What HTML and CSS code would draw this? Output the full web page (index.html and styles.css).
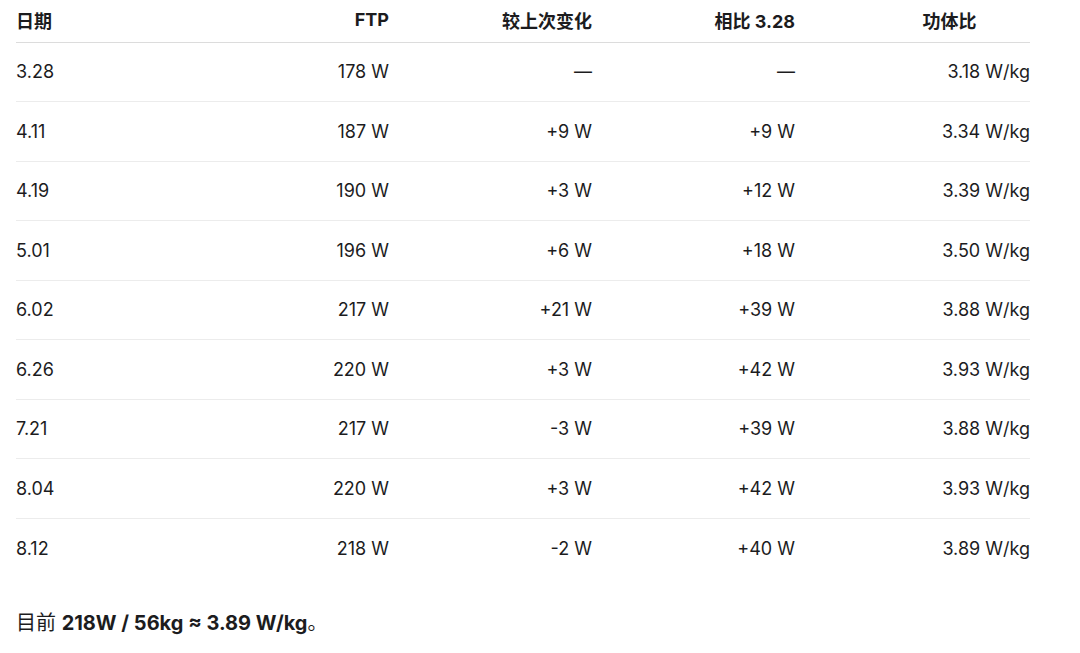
FILE: index.html
```html
<!DOCTYPE html>
<html lang="zh">
<head>
<meta charset="utf-8">
<link rel="stylesheet" href="styles.css">
</head>
<body>
<div class="table">
  <div class="row head">
    <div class="c c1">日期</div>
    <div class="c">FTP</div>
    <div class="c">较上次变化</div>
    <div class="c">相比 3.28</div>
    <div class="c c5">功体比</div>
  </div>
  <div class="row"><div class="c c1">3.28</div><div class="c">178 W</div><div class="c">—</div><div class="c">—</div><div class="c">3.18 W/kg</div></div>
  <div class="row"><div class="c c1">4.11</div><div class="c">187 W</div><div class="c">+9 W</div><div class="c">+9 W</div><div class="c">3.34 W/kg</div></div>
  <div class="row"><div class="c c1">4.19</div><div class="c">190 W</div><div class="c">+3 W</div><div class="c">+12 W</div><div class="c">3.39 W/kg</div></div>
  <div class="row"><div class="c c1">5.01</div><div class="c">196 W</div><div class="c">+6 W</div><div class="c">+18 W</div><div class="c">3.50 W/kg</div></div>
  <div class="row"><div class="c c1">6.02</div><div class="c">217 W</div><div class="c">+21 W</div><div class="c">+39 W</div><div class="c">3.88 W/kg</div></div>
  <div class="row"><div class="c c1">6.26</div><div class="c">220 W</div><div class="c">+3 W</div><div class="c">+42 W</div><div class="c">3.93 W/kg</div></div>
  <div class="row"><div class="c c1">7.21</div><div class="c">217 W</div><div class="c">-3 W</div><div class="c">+39 W</div><div class="c">3.88 W/kg</div></div>
  <div class="row"><div class="c c1">8.04</div><div class="c">220 W</div><div class="c">+3 W</div><div class="c">+42 W</div><div class="c">3.93 W/kg</div></div>
  <div class="row last"><div class="c c1">8.12</div><div class="c">218 W</div><div class="c">-2 W</div><div class="c">+40 W</div><div class="c">3.89 W/kg</div></div>
</div>
<p class="summary">目前 <strong>218W / 56kg ≈ 3.89 W/kg</strong>。</p>
</body>
</html>
```
FILE: styles.css
```css
html, body {
  margin: 0;
  padding: 0;
  background: #ffffff;
}
body {
  font-family: "Inter", "Noto Sans CJK SC", sans-serif;
  color: #1c1c1e;
  padding-left: 16px;
}
.table {
  width: 1014px;
}
.row {
  display: grid;
  grid-template-columns: 170px 203px 203px 203px 235px;
  align-items: center;
  height: 59.5px;
  border-bottom: 1px solid #ececec;
  box-sizing: border-box;
  font-size: 18px;
}
.row.head {
  height: 42.5px;
  padding-bottom: 2px;
  border-bottom: 1.5px solid #dcdcdc;
  font-weight: 700;
  font-size: 18px;
}
.row.last {
  border-bottom: none;
}
.c {
  text-align: right;
  white-space: nowrap;
}
.c1 {
  text-align: left;
}
.head .c5 {
  text-align: center;
  padding-left: 74px;
}
.summary {
  margin: 29px 0 0 0;
  font-size: 20px;
}
.summary strong {
  font-weight: 700;
}
```
